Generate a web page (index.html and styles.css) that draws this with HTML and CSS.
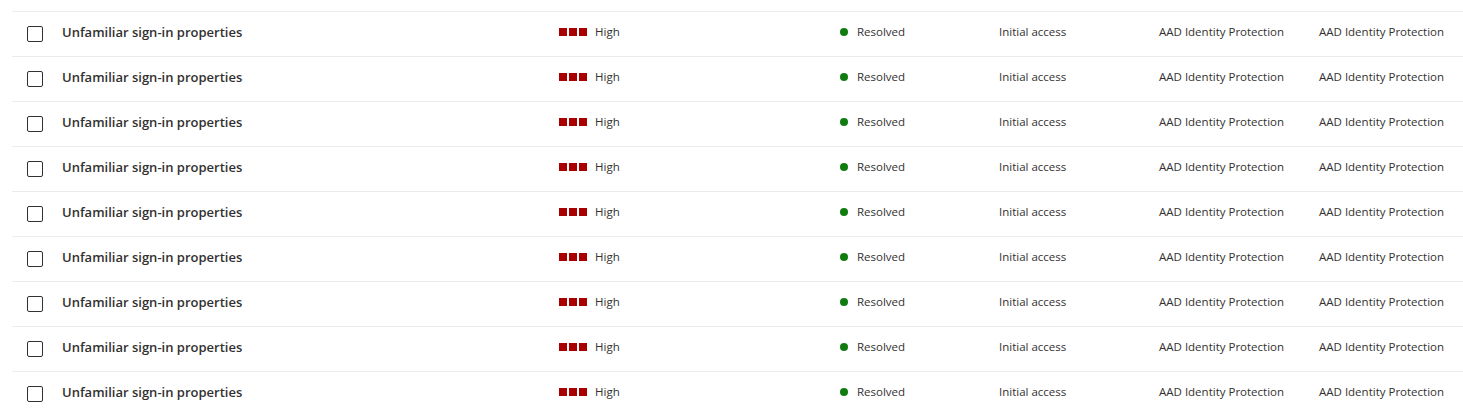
FILE: index.html
```html
<!DOCTYPE html>
<html lang="en">
<head>
    <meta charset="UTF-8">
    <meta name="viewport" content="width=device-width, initial-scale=1.0">
    <title>Alerts</title>
    <link rel="stylesheet" href="styles.css">
</head>
<body>
    <div class="list" id="list"></div>

    <template id="rowTemplate">
        <div class="row">
            <div class="cell check-cell"><span class="checkbox"></span></div>
            <div class="cell title">Unfamiliar sign-in properties</div>
            <div class="cell severity">
                <span class="bars"><i></i><i></i><i></i></span>
                <span>High</span>
            </div>
            <div class="cell status"><span class="dot"></span><span>Resolved</span></div>
            <div class="cell">Initial access</div>
            <div class="cell">AAD Identity Protection</div>
            <div class="cell">AAD Identity Protection</div>
        </div>
    </template>

    <script>
        const list = document.getElementById('list');
        const template = document.getElementById('rowTemplate');

        // Nine identical alert rows
        for (let i = 0; i < 9; i++) {
            list.appendChild(template.content.cloneNode(true));
        }
    </script>
</body>
</html>
```

FILE: styles.css
```css
body {
    margin: 0;
    padding: 0;
    background-color: #fff;
    font-family: 'Open Sans', 'Noto Sans', Arial, sans-serif;
    font-size: 11.5px;
    color: #323130;
    overflow: hidden;
}

.list {
    padding: 11px 0 0 12px;
}

.row {
    display: grid;
    grid-template-columns: 38px 497px 281px 159px 160px 160px 1fr;
    height: 44px;
    border-top: 1px solid #edebe9;
    align-items: center;
}

.cell {
    padding-left: 12px;
    padding-bottom: 5px;
    white-space: nowrap;
    overflow: hidden;
}

.check-cell {
    padding-left: 15px;
    padding-bottom: 1px;
    display: flex;
}

.checkbox {
    display: block;
    width: 14px;
    height: 14px;
    border: 1px solid #323130;
    border-radius: 2px;
}

.title {
    font-size: 13px;
    font-weight: 600;
}

.severity, .status {
    display: flex;
    align-items: center;
}

.bars {
    display: flex;
    gap: 2px;
    margin-right: 8px;
}

.bars i {
    display: block;
    width: 8px;
    height: 8px;
    background-color: #a80000;
}

.dot {
    width: 8px;
    height: 8px;
    border-radius: 50%;
    background-color: #107c10;
    margin-right: 9px;
}
```
